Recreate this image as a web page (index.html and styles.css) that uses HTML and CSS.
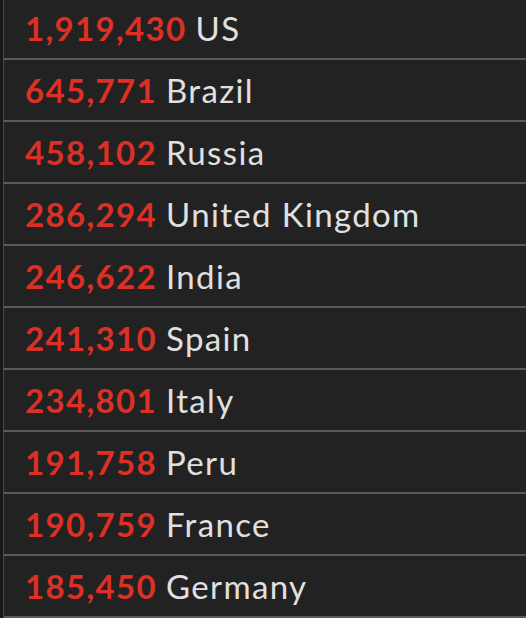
FILE: index.html
```html
<!DOCTYPE html>
<html>
<head>
<meta charset="utf-8">
<link rel="stylesheet" href="styles.css">
</head>
<body>
<ul class="list">
  <li class="row"><span class="num">1,919,430</span><span class="name">US</span></li>
  <li class="row"><span class="num">645,771</span><span class="name">Brazil</span></li>
  <li class="row"><span class="num">458,102</span><span class="name">Russia</span></li>
  <li class="row"><span class="num">286,294</span><span class="name">United Kingdom</span></li>
  <li class="row"><span class="num">246,622</span><span class="name">India</span></li>
  <li class="row"><span class="num">241,310</span><span class="name">Spain</span></li>
  <li class="row"><span class="num">234,801</span><span class="name">Italy</span></li>
  <li class="row"><span class="num">191,758</span><span class="name">Peru</span></li>
  <li class="row"><span class="num">190,759</span><span class="name">France</span></li>
  <li class="row"><span class="num">185,450</span><span class="name">Germany</span></li>
</ul>
</body>
</html>
```
FILE: styles.css
```css
html, body {
  margin: 0;
  padding: 0;
  background: #181818;
  height: 100%;
  overflow: hidden;
}
.list {
  list-style: none;
  margin: -2px 0 0 3px;
  padding: 0;
  background: #222222;
  border-left: 1px solid #474747;
  font-family: Lato, "Open Sans", sans-serif;
}
.row {
  height: 60px;
  border-bottom: 2px solid #5b5b5b;
  display: flex;
  align-items: center;
  gap: 9px;
  padding-left: 21px;
  font-size: 33px;
  letter-spacing: 1.35px;
  white-space: nowrap;
}
.num {
  color: #dc3026;
  font-weight: 700;
}
.name {
  color: #e0e0e0;
  font-weight: 400;
}
```
